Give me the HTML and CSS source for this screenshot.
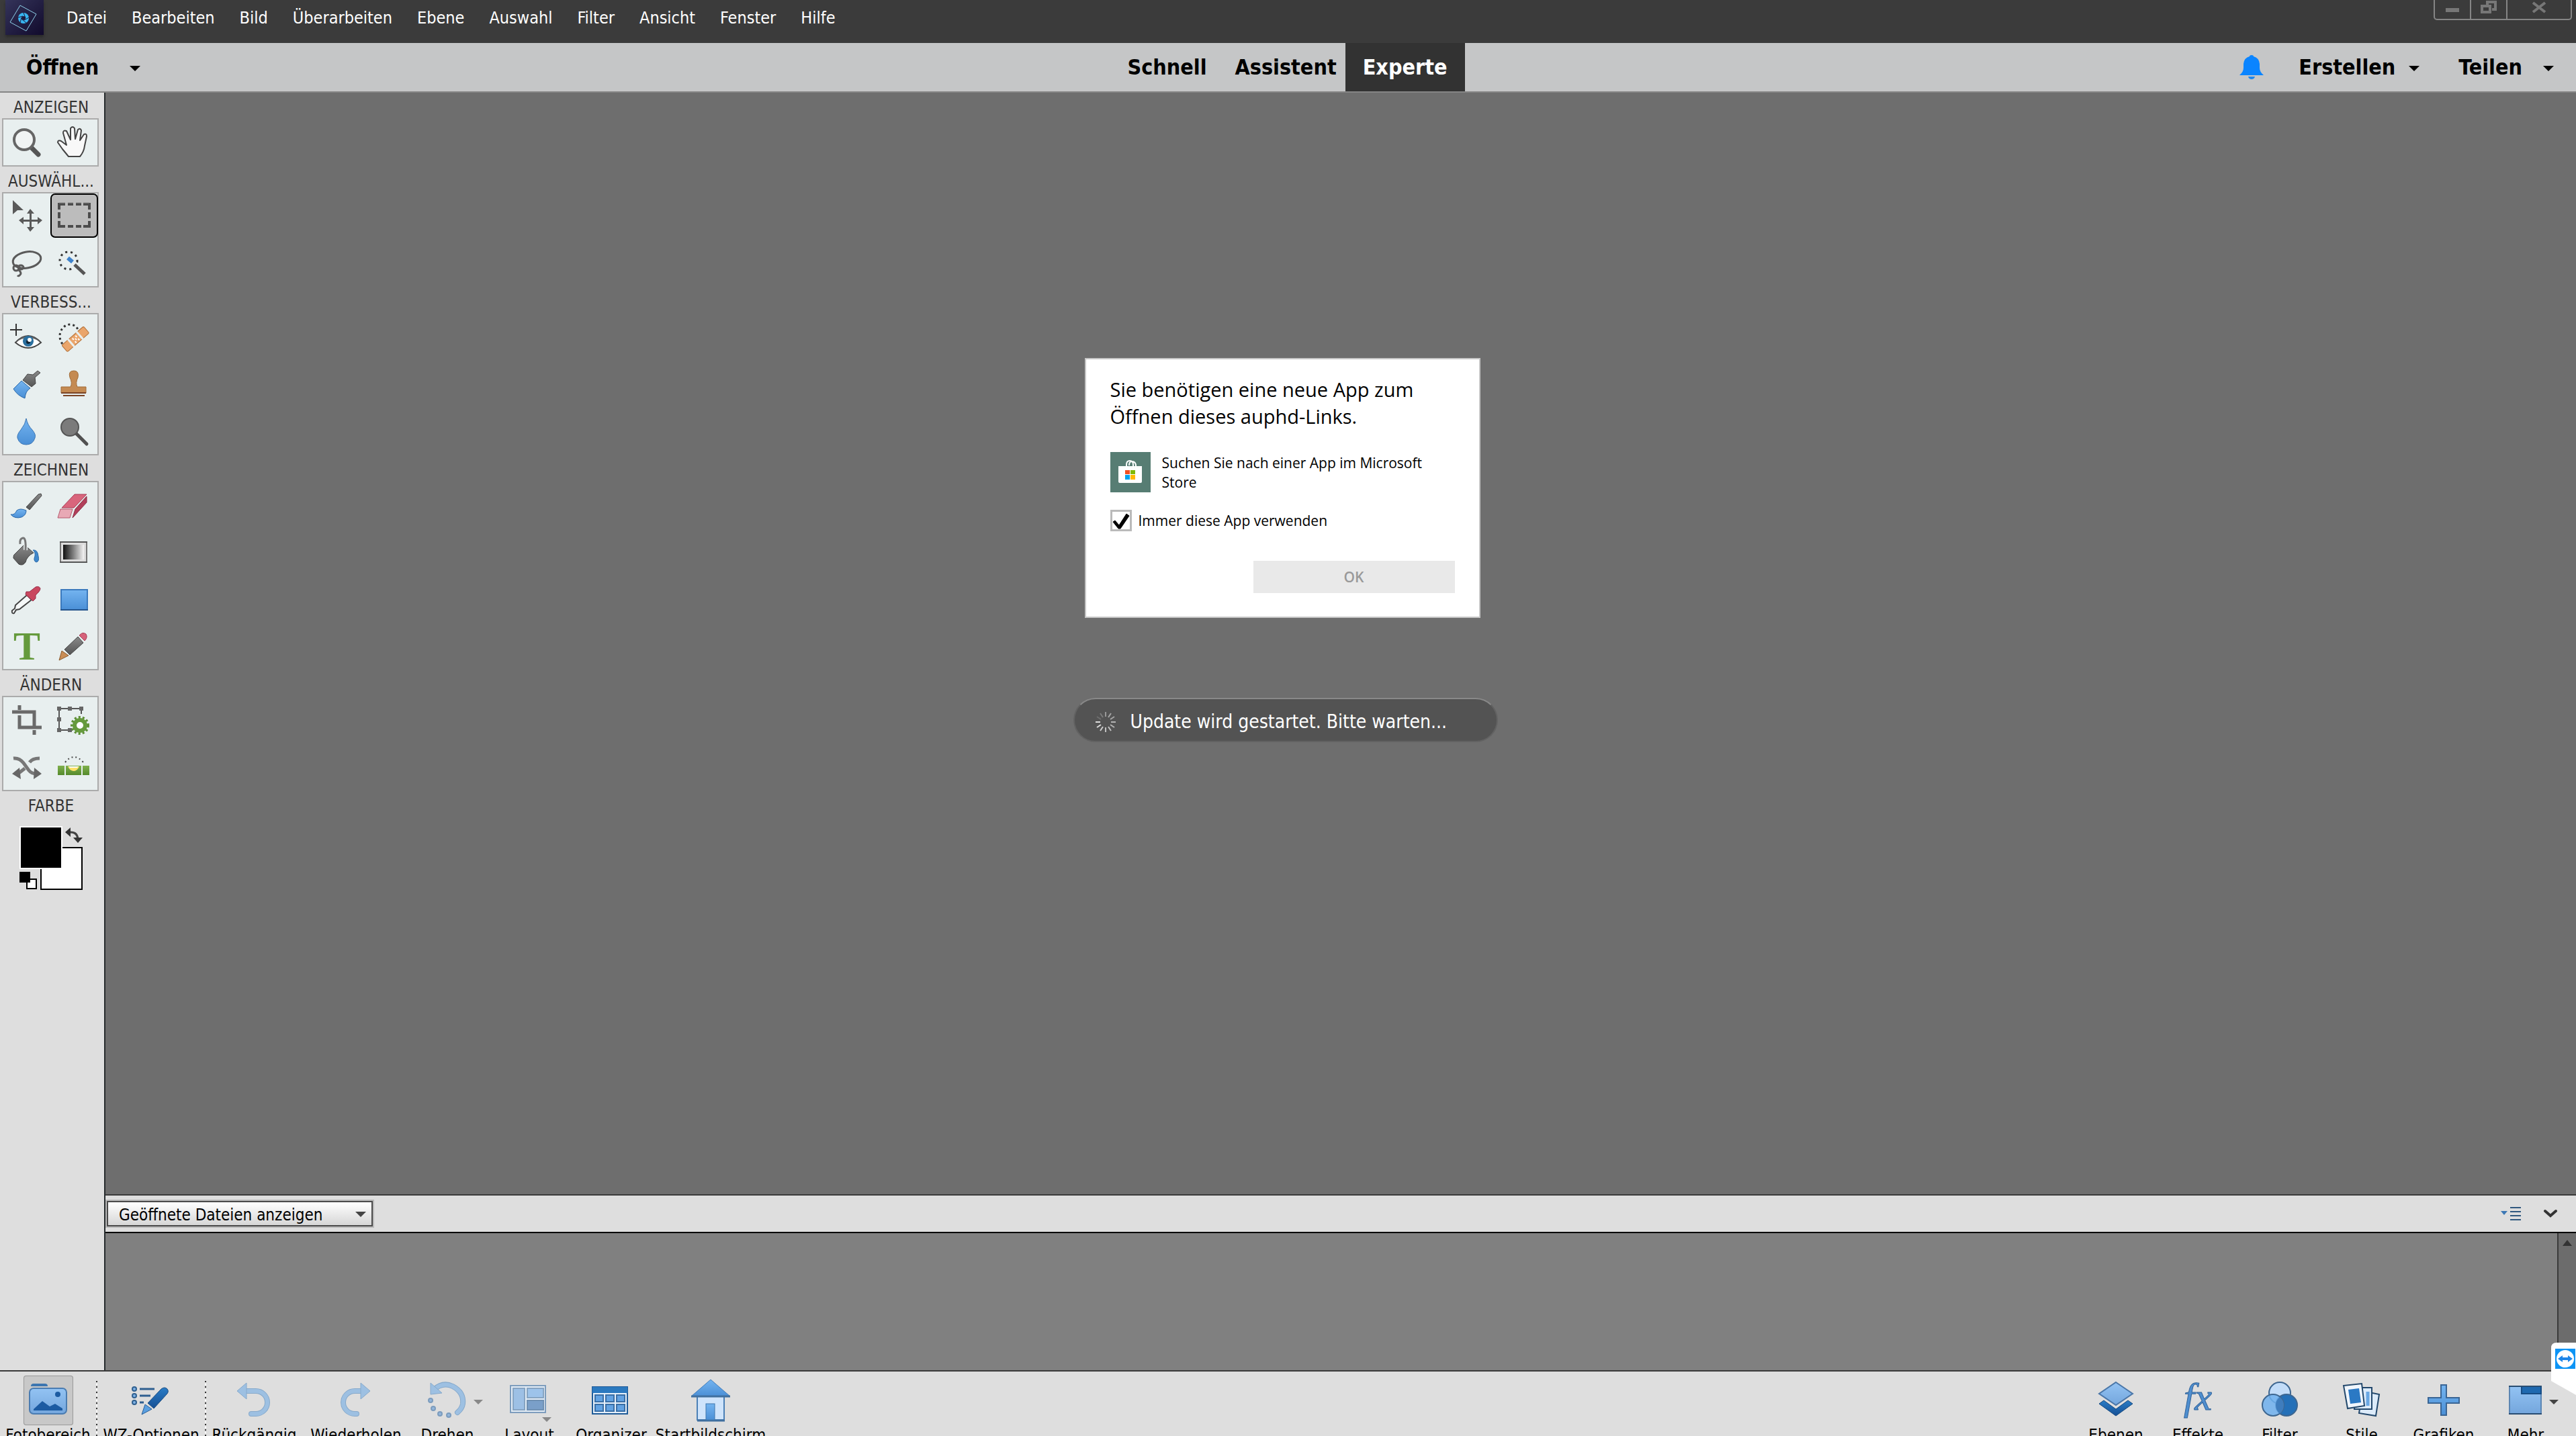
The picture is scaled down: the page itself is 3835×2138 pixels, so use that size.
FILE: index.html
```html
<!DOCTYPE html>
<html lang="de">
<head>
    <meta charset="utf-8">
    <title>Fotoeditor</title>
    <link rel="stylesheet" href="styles.css">
</head>
<body>
    <svg class="defs" width="0" height="0">
        <defs>
            <linearGradient id="grey" x1="0" y1="0" x2="0" y2="1"><stop offset="0" stop-color="#8a8a8a"/><stop offset="1" stop-color="#555"/></linearGradient>
            <linearGradient id="blue" x1="0" y1="0" x2="0" y2="1"><stop offset="0" stop-color="#74b4f0"/><stop offset="1" stop-color="#4a8fd6"/></linearGradient>
            <linearGradient id="light" x1="0" y1="0" x2="0" y2="1"><stop offset="0" stop-color="#93c3f3"/><stop offset="1" stop-color="#74a6dd"/></linearGradient>
            <linearGradient id="dark" x1="0" y1="0" x2="0" y2="1"><stop offset="0" stop-color="#2a7cc6"/><stop offset="1" stop-color="#154f94"/></linearGradient>
            <linearGradient id="green" x1="0" y1="0" x2="0" y2="1"><stop offset="0" stop-color="#7fb04c"/><stop offset="1" stop-color="#558a2c"/></linearGradient>
            <linearGradient id="ramp"><stop offset="0" stop-color="#111"/><stop offset="1" stop-color="#f4f4f4"/></linearGradient>
            <linearGradient id="navy" x1="0" y1="0" x2="1" y2="1"><stop offset="0" stop-color="#34345a"/><stop offset="1" stop-color="#110a2c"/></linearGradient>
        </defs>
    </svg>

    <header class="menubar">
        <svg class="logo" viewBox="0 0 57 52">
            <rect width="57" height="52" fill="url(#navy)"/>
            <path d="M22 8L46 21L31 46L7 33Z" fill="none" stroke="#8fd0e8" stroke-width="1" stroke-linejoin="round"/>
            <circle cx="27" cy="27" r="8" fill="#38b6f1"/>
            <path d="M27 19L30 27M35 26L28 30M31 34L25 29M22 34L24 26M19 26L26 24" stroke="#1d1a3e" stroke-width="1"/>
            <circle cx="27" cy="27" r="3" fill="#1d1a3e"/>
        </svg>
        <nav class="menu">
            <a href="#">Datei</a>
            <a href="#">Bearbeiten</a>
            <a href="#">Bild</a>
            <a href="#">Überarbeiten</a>
            <a href="#">Ebene</a>
            <a href="#">Auswahl</a>
            <a href="#">Filter</a>
            <a href="#">Ansicht</a>
            <a href="#">Fenster</a>
            <a href="#">Hilfe</a>
        </nav>
        <div class="window-buttons">
            <button aria-label="Minimieren"><svg width="24" height="24"><rect x="2" y="12" width="20" height="6" fill="#777"/></svg></button>
            <button aria-label="Verkleinern"><svg width="24" height="24"><path d="M10 8V3H22V14H17" fill="none" stroke="#777" stroke-width="4"/><rect x="2" y="9" width="12" height="9" fill="none" stroke="#777" stroke-width="4"/></svg></button>
            <button class="close" aria-label="Schließen"><svg width="24" height="24"><path d="M3 4L21 18M21 4L3 18" stroke="#777" stroke-width="4"/></svg></button>
        </div>
    </header>

    <div class="modebar">
        <div class="mode-left">
            <button class="open">Öffnen</button>
            <button class="arrow" aria-label="Zuletzt geöffnet"><i class="caret"></i></button>
        </div>
        <div class="modes">
            <button class="mode first">Schnell</button>
            <button class="mode">Assistent</button>
            <button class="mode active">Experte</button>
        </div>
        <div class="mode-right">
            <svg class="bell" viewBox="0 0 36 36"><path d="M18 0Q21 0 21 2Q29 4 30 13V19Q30 25 36 30H0Q6 25 6 19V13Q7 4 15 2Q15 0 18 0Z" fill="#0a84ff"/><path d="M13 32H23Q22 36 18 36Q14 36 13 32Z" fill="#1e87ee"/></svg>
            <button class="create">Erstellen<i class="caret"></i></button>
            <button class="share">Teilen<i class="caret"></i></button>
        </div>
    </div>

    <div class="workspace">
        <aside class="toolbox">
            <h2>ANZEIGEN</h2>
            <div class="tools">
                <button aria-label="Zoom"><svg viewBox="0 0 56 56"><path d="M34 35L45 46" stroke="#555" stroke-width="7" stroke-linecap="round"/><circle cx="24" cy="24" r="15" fill="#f1f4f4" stroke="#666" stroke-width="4"/></svg></button>
                <button aria-label="Hand"><svg viewBox="0 0 56 56"><path d="M19 49L10 38L3 28Q3 24 8 26L16 32L11 14Q11 9 16 11L22 24L22 7Q25 3 28 7L29 23L33 9Q36 6 38 10L36 25L42 16Q46 14 46 19L43 33Q42 42 36 49Z" fill="#f8f8f8" stroke="#444" stroke-width="2" stroke-linejoin="round"/></svg></button>
            </div>
            <h2>AUSWÄHL...</h2>
            <div class="tools">
                <button aria-label="Verschieben"><svg viewBox="0 0 56 56" fill="#5a5a5a"><path d="M7 4L23 19L14 19L7 25Z"/><path d="M32 22H35V47H32ZM21 33H46V36H21Z"/><path d="M33 17L39 24H28ZM33 51L39 44H28ZM16 34L23 29V40ZM51 34L44 29V40Z"/></svg></button>
                <button class="selected" aria-label="Auswahlrechteck"><svg viewBox="0 0 56 56" stroke="#4c4c4c" stroke-width="4" fill="none"><path d="M5 19V11H14M18 11H26M30 11H38M41 11H50V19M50 23V32M50 36V44H41M38 44H30M26 44H18M14 44H5V36M5 32V23" /><path d="M5 9H14M18 9H26M30 9H38M41 9H50" stroke="#8a8a8a" stroke-width="1"/></svg></button>
                <button aria-label="Lasso"><svg viewBox="0 0 56 56" fill="none" stroke="#5a5a5a" stroke-width="3"><ellipse cx="28" cy="23" rx="21" ry="12" transform="rotate(-10 28 23)"/><ellipse cx="12" cy="35" rx="4" ry="4"/><ellipse cx="19" cy="34" rx="4" ry="3"/><path d="M15 37Q21 42 18 45Q16 48 14 46"/></svg></button>
                <button aria-label="Schnellauswahl"><svg viewBox="0 0 56 56" fill="none"><circle cx="19" cy="24" r="13" stroke="#333" stroke-width="3" stroke-dasharray="3 5"/><path d="M15 17L45 46" stroke="#e8efef" stroke-width="9"/><path d="M18 20L25 26" stroke="#3f83cc" stroke-width="6"/><path d="M28 30L43 44" stroke="#555" stroke-width="5"/></svg></button>
            </div>
            <h2>VERBESS...</h2>
            <div class="tools">
                <button aria-label="Rote Augen"><svg viewBox="0 0 56 56"><path d="M3 17H21M12 8V26" stroke="#333" stroke-width="2"/><path d="M11 36Q30 16 49 36Q30 52 11 36Z" fill="#fff" stroke="#444" stroke-width="2"/><path d="M11 36Q30 16 49 36Q30 22 11 36Z" fill="#666"/><circle cx="30" cy="34" r="8" fill="#2a6f9e"/><circle cx="30" cy="35" r="3" fill="#123"/><circle cx="32" cy="32" r="3" fill="#fff"/></svg></button>
                <button aria-label="Bereichsreparatur"><svg viewBox="0 0 56 56"><path d="M10 38Q4 30 7 20Q12 9 22 9Q30 10 34 18" fill="none" stroke="#333" stroke-width="3" stroke-dasharray="3 4"/><g transform="rotate(-41 30 31)"><rect x="8" y="24" width="43" height="13" rx="2" fill="#eaa56b" stroke="#b4733c"/><path d="M21 23V38M38 23V38" stroke="#e8efef" stroke-width="3"/><path d="M26 28H28M32 28H34M26 34H28M32 34H34M29 31H31" stroke="#fff" stroke-width="3"/></g></svg></button>
                <button aria-label="Smartpinsel"><svg viewBox="0 0 56 56"><path d="M44 8L48 11L40 18L41 27L35 32L22 22L29 13L37 14Z" fill="url(#grey)" stroke="#444"/><path d="M20 23L33 34Q26 38 25 49Q14 45 8 35Z" fill="url(#blue)" stroke="#2a68a8"/></svg></button>
                <button aria-label="Stempel"><svg viewBox="0 0 56 56"><path d="M8 32H22Q25 26 21 18Q18 8 27 8Q35 8 33 18Q29 26 32 32H45V41H8Z" fill="#c48a52" stroke="#a06b38"/><path d="M8 41H45M11 45H43" stroke="#7a4426" stroke-width="2"/></svg></button>
                <button aria-label="Weichzeichner"><svg viewBox="0 0 56 56"><path d="M27 9Q29 19 36 26Q42 33 40 38Q37 48 27 48Q17 48 14 38Q13 33 19 26Q26 17 27 9Z" fill="url(#blue)" stroke="#3a75b4"/></svg></button>
                <button aria-label="Schwamm"><svg viewBox="0 0 56 56"><path d="M30 31L46 47" stroke="#505050" stroke-width="5" stroke-linecap="round"/><circle cx="21" cy="22" r="13" fill="#7b7b7b" stroke="#555" stroke-width="2"/></svg></button>
            </div>
            <h2>ZEICHNEN</h2>
            <div class="tools">
                <button aria-label="Pinsel"><svg viewBox="0 0 56 56"><path d="M49 11L50 14L32 35L27 31L45 12Z" fill="url(#grey)" stroke="#444"/><path d="M4 42Q10 43 13 36Q18 32 27 36Q27 43 20 46Q10 49 4 42Z" fill="url(#blue)" stroke="#2a68a8"/></svg></button>
                <button aria-label="Radiergummi"><svg viewBox="0 0 56 56"><path d="M28 12H46L27 32H9Z" fill="#d9657c" stroke="#a93c55"/><path d="M7 34H25L21 47H3Z" fill="#e8a9b5" stroke="#b5596d"/><path d="M46 15V24L25 47L29 34Z" fill="#b23f5a" stroke="#8d2b44"/></svg></button>
                <button aria-label="Füllwerkzeug"><svg viewBox="0 0 56 56"><path d="M24 17L38 29Q28 34 26 43Q22 49 16 46L8 37Q7 32 12 29Z" fill="url(#grey)" stroke="#444"/><path d="M26 25Q27 6 22 7Q17 8 18 16" fill="none" stroke="#e8efef" stroke-width="6"/><path d="M26 25Q27 6 22 7Q17 8 18 16" fill="none" stroke="#777" stroke-width="3"/><path d="M37 25Q44 24 45 34Q47 42 42 43Q37 41 40 34Q41 28 37 25Z" fill="#3f88cc" stroke="#2a68a8"/></svg></button>
                <button aria-label="Verlauf"><svg viewBox="0 0 56 56"><rect x="7" y="13" width="39" height="30" fill="#ddd" stroke="#777" stroke-width="2"/><path d="M6 13H47M6 43H47" stroke="#555" stroke-width="2"/><rect x="11" y="17" width="31" height="22" fill="url(#ramp)"/></svg></button>
                <button aria-label="Farbwähler"><svg viewBox="0 0 56 56"><path d="M28 22L35 29L17 43L12 44L9 49Q5 50 6 45L10 42L11 37Z" fill="#f5f8f8" stroke="#444" stroke-width="2"/><path d="M27 17L32 17L41 10Q46 8 48 12Q48 16 41 22L41 27L37 31L26 21Z" fill="#c9475f" stroke="#98304a"/></svg></button>
                <button aria-label="Form"><svg viewBox="0 0 56 56"><rect x="8" y="14" width="39" height="30" fill="url(#blue)" stroke="#3a79bd" stroke-width="2"/><path d="M7 44H48" stroke="#24548c" stroke-width="2"/></svg></button>
                <button aria-label="Text"><svg viewBox="0 0 56 56"><text class="glyph-t" x="28" y="48" text-anchor="middle">T</text></svg></button>
                <button aria-label="Buntstift"><svg viewBox="0 0 56 56"><path d="M5 49L9 35L19 42Z" fill="#c98d55" stroke="#8b5a2c"/><path d="M13 33L33 14L41 23L21 41Z" fill="url(#grey)" stroke="#444"/><path d="M35 12Q40 6 45 10Q48 15 43 20Z" fill="#d6627a" stroke="#a63d55"/></svg></button>
            </div>
            <h2>ÄNDERN</h2>
            <div class="tools">
                <button aria-label="Freistellen"><svg viewBox="0 0 56 56" fill="none" stroke="#6a6a6a" stroke-width="5"><path d="M6 16H39V37M17 6V13M17 21V39H50M39 43V50"/></svg></button>
                <button aria-label="Neu zusammensetzen"><svg viewBox="0 0 56 56"><path d="M38 19V11H5V43H25" fill="none" stroke="#555" stroke-width="2"/><path d="M2 8H8V14H2ZM18 8H24V14H18ZM35 8H41V14H35ZM2 24H8V30H2ZM2 40H8V46H2ZM18 40H24V46H18Z" fill="#666"/><circle cx="36" cy="36" r="12" fill="none" stroke="#5d8f36" stroke-width="4" stroke-dasharray="3 3"/><circle cx="36" cy="36" r="8" fill="#fff" stroke="#659a3c" stroke-width="6"/></svg></button>
                <button aria-label="Inhaltssensitiv verschieben"><svg viewBox="0 0 56 56"><path d="M8 15Q17 14 23 22L31 33Q35 38 42 38M47 15Q36 15 32 21M25 30L16 37" fill="none" stroke="#777" stroke-width="5"/><path d="M39 29L50 38L38 46ZM17 29L6 38L19 46Z" fill="#666"/></svg></button>
                <button aria-label="Gerade ausrichten"><svg viewBox="0 0 56 56"><path d="M14 21Q27 5 41 21" fill="none" stroke="#444" stroke-width="2" stroke-dasharray="2 4"/><path d="M3 26H13V40H3ZM15 26H38V40H15ZM40 26H50V40H40Z" fill="url(#green)"/><path d="M18 27H35Q32 34 27 34Q21 34 18 27Z" fill="#ffe069"/><path d="M19 27H34L32 29H21Z" fill="#fff"/></svg></button>
            </div>
            <h2>FARBE</h2>
            <svg class="swatches" viewBox="0 0 96 96">
                <rect x="32" y="32" width="61" height="62" fill="#fff" stroke="#000" stroke-width="2"/>
                <rect x="0" y="0" width="64" height="64" fill="#fff"/>
                <rect x="2" y="2" width="60" height="60" fill="#000"/>
                <rect x="11" y="79" width="14" height="14" fill="#fff" stroke="#000" stroke-width="2"/>
                <rect x="0" y="68" width="16" height="16" fill="#000"/>
                <path d="M74 9Q86 8 87 19" fill="none" stroke="#444" stroke-width="3"/>
                <path d="M68 9L76 2V16ZM80 17H94L87 25Z" fill="#333"/>
            </svg>
        </aside>

        <main class="stage">
            <div class="canvas"></div>
            <div class="binbar">
                <div class="bin-select">
                    <select aria-label="Fotobereich">
                        <option>Geöffnete Dateien anzeigen</option>
                    </select>
                </div>
                <div class="bin-actions">
                    <button aria-label="Optionen"><svg width="30" height="24"><path d="M0 8H10L5 14Z" fill="#3c78b4"/><path d="M14 3H30M14 9H30M14 15H30M14 21H30" stroke="#31597f" stroke-width="2"/></svg></button>
                    <button aria-label="Einklappen"><svg width="20" height="24"><path d="M2 8L10 15L18 8" fill="none" stroke="#333" stroke-width="4" stroke-linecap="round"/></svg></button>
                </div>
            </div>
            <div class="bin">
                <div class="scrollbar"><svg width="14" height="9"><path d="M7 0L14 9H0Z" fill="#333"/></svg></div>
            </div>
        </main>
    </div>

    <footer class="taskbar">
        <button class="task m"><span class="pic pressed"><svg viewBox="0 0 74 74"><path d="M11 16Q11 12 15 12H32Q36 12 36 16Z" fill="#3d76b0"/><rect x="9" y="19" width="55" height="38" rx="6" fill="url(#light)" stroke="#4a7cb1" stroke-width="2"/><path d="M15 50L28 38L39 46L47 42L58 49V52H15Z" fill="#1c5ba2"/><circle cx="51" cy="28" r="4" fill="#1c5ba2"/></svg></span>Fotobereich</button>
        <i class="divider"></i>
        <button class="task l"><span class="pic"><svg viewBox="0 0 74 74"><g fill="#7fb2e6" stroke="#30608f" stroke-width="2"><circle cx="12" cy="20" r="3"/><circle cx="12" cy="30" r="3"/><circle cx="12" cy="40" r="3"/></g><path d="M20 20H42M20 30H36M20 40H26" stroke="#2f5f90" stroke-width="3"/><path d="M23 58L28 43L38 50Z" fill="#5a9fe0" stroke="#2a5f97"/><path d="M32 41L52 20Q57 16 61 20Q64 24 60 28L41 49Z" fill="url(#dark)" stroke="#1d4d80"/></svg></span>WZ-Optionen</button>
        <i class="divider"></i>
        <button class="task m"><span class="pic"><svg viewBox="0 0 74 74"><path d="M22 23H39A17 17 0 0 1 39 57H32" fill="none" stroke="#86a9cb" stroke-width="8" stroke-linecap="round"/><path d="M22 23H39A17 17 0 0 1 39 57H32" fill="none" stroke="#9dc0e2" stroke-width="6" stroke-linecap="round"/><path d="M11 23L25 11V35Z" fill="#9dc0e2" stroke="#86a9cb"/></svg></span>Rückgängig</button>
        <button class="task l"><span class="pic"><svg viewBox="0 0 74 74"><path d="M50 23H35A17 17 0 0 0 35 57H38" fill="none" stroke="#86a9cb" stroke-width="8" stroke-linecap="round"/><path d="M50 23H35A17 17 0 0 0 35 57H38" fill="none" stroke="#9dc0e2" stroke-width="6" stroke-linecap="round"/><path d="M58 23L44 11V35Z" fill="#9dc0e2" stroke="#86a9cb"/></svg></span>Wiederholen</button>
        <button class="task s"><span class="pic"><svg viewBox="0 0 74 74"><path d="M17 21Q30 9 45 16Q62 25 60 42Q59 49 52 55" fill="none" stroke="#86a9cb" stroke-width="8" stroke-linecap="round"/><path d="M17 21Q30 9 45 16Q62 25 60 42Q59 49 52 55" fill="none" stroke="#9dc0e2" stroke-width="6" stroke-linecap="round"/><path d="M12 11V28L29 26Z" fill="#9dc0e2" stroke="#86a9cb"/><g fill="#94b6dc" stroke="#7c9cbd" stroke-width="2"><circle cx="12" cy="37" r="3"/><circle cx="16" cy="49" r="3"/><circle cx="26" cy="57" r="3"/><circle cx="39" cy="59" r="3"/></g></svg><i class="drop grey"></i></span>Drehen</button>
        <button class="task n"><span class="pic"><svg viewBox="0 0 74 74"><rect x="9" y="15" width="52" height="40" fill="#e3ecf5" stroke="#7e9dbd" stroke-width="2"/><path d="M13 19H30V51H13Z" fill="#9dc0e5" stroke="#86a4c2" stroke-width="2"/><path d="M34 19H58V33H34Z" fill="#9dc3ea" stroke="#86a4c2" stroke-width="2"/><path d="M34 37H58V51H34Z" fill="#7a9fc9" stroke="#6f90b3" stroke-width="2"/></svg><i class="drop grey low"></i></span>Layout</button>
        <button class="task s"><span class="pic"><svg viewBox="0 0 74 74"><rect x="9" y="17" width="52" height="40" fill="#e6f0fa" stroke="#1f5b98" stroke-width="2"/><rect x="9" y="17" width="52" height="9" fill="#2b79bf"/><g fill="#62a2e2" stroke="#3a6fa6" stroke-width="2"><path d="M13 29H25V39H13ZM29 29H41V39H29ZM45 29H57V39H45ZM13 43H25V53H13ZM29 43H41V53H29ZM45 43H57V53H45Z"/></g></svg></span>Organizer</button>
        <button class="task xl"><span class="pic"><svg viewBox="0 0 74 74"><rect x="17" y="30" width="40" height="36" fill="#cfe4fb" stroke="#4a7fb6" stroke-width="2"/><path d="M37 6L66 31H8Z" fill="url(#blue)" stroke="#3f7cbb"/><path d="M8 31H66M17 67H58" stroke="#41709f" stroke-width="3"/><rect x="30" y="42" width="13" height="24" fill="url(#blue)" stroke="#3f76ad"/></svg></span>Startbildschirm</button>

        <div class="panels">
            <button class="task p"><span class="pic"><svg viewBox="0 0 74 74"><path d="M12 42L19 37L37 50L55 37L62 42L37 60Z" fill="url(#dark)" stroke="#174a80"/><path d="M37 10L62 27L37 44L12 27Z" fill="url(#light)" stroke="#4a76a8" stroke-width="2"/></svg></span>Ebenen</button>
            <button class="task p"><span class="pic"><svg viewBox="0 0 74 74"><text class="glyph-fx" x="37" y="51" text-anchor="middle">fx</text></svg></span>Effekte</button>
            <button class="task p"><span class="pic"><svg viewBox="0 0 74 74" stroke="#3d6690" stroke-width="2"><circle cx="37" cy="26" r="16" fill="#c2dcf8"/><circle cx="47" cy="44" r="16" fill="#2470b8"/><circle cx="27" cy="44" r="16" fill="#6fb0ee" fill-opacity=".85"/><path d="M37 32Q43 37 43 44Q43 52 37 57Q31 52 31 44Q31 37 37 32Z" fill="#3f7dbd" stroke="none"/></svg></span>Filter</button>
            <button class="task p"><span class="pic"><svg viewBox="0 0 74 74" stroke="#23486c" stroke-width="2"><path d="M38 23L63 28L58 60L33 56Z" fill="#dcebfa"/><path d="M26 18H52V50H26Z" fill="#dcebfa"/><path d="M46 24V45" stroke="#6aa8e4" stroke-width="5"/><path d="M10 15L37 12L41 45L16 49Z" fill="#f0f6fd"/><path d="M17 21L33 19L36 40L20 42Z" fill="#2b79c4" stroke="none"/></svg></span>Stile</button>
            <button class="task p"><span class="pic"><svg viewBox="0 0 74 74"><path d="M33 14H41V33H60V41H41V59H33V41H14V33H33Z" fill="url(#blue)" stroke="#3a6594" stroke-width="2"/></svg></span>Grafiken</button>
            <button class="task p"><span class="pic"><svg viewBox="0 0 74 74"><rect x="13" y="16" width="47" height="41" fill="url(#light)" stroke="#5c86b3" stroke-width="2"/><rect x="31" y="16" width="29" height="11" fill="#1f69b0" stroke="#174d85" stroke-width="2"/><path d="M12 16H61M12 57H61" stroke="#294d72" stroke-width="2"/></svg><i class="drop more"></i></span>Mehr</button>
        </div>
    </footer>

    <form class="dialog">
        <h1>Sie benötigen eine neue App zum Öffnen dieses auphd-Links.</h1>
        <div class="store">
            <svg viewBox="0 0 60 60">
                <rect width="60" height="60" fill="#577d73"/>
                <path d="M24 22V19Q24 13 29 13Q34 13 34 19V22M28 20Q28 14 32 14Q38 14 38 21" fill="none" stroke="#fff" stroke-width="2"/>
                <path d="M12 21H47V44Q47 46 45 46H14Q12 46 12 44Z" fill="#fff"/>
                <path d="M22 27H29V33H22Z" fill="#f25022"/><path d="M30 27H37V33H30Z" fill="#7fba00"/>
                <path d="M22 34H29V41H22Z" fill="#00a4ef"/><path d="M30 34H37V41H30Z" fill="#ffb900"/>
            </svg>
            <p>Suchen Sie nach einer App im Microsoft Store</p>
        </div>
        <label class="always"><span class="check"><input type="checkbox" checked><svg viewBox="0 0 32 32"><path d="M4 18L7 16L13 23L24 6L28 9L15 28H12Z" fill="#000" stroke="#000"/></svg></span>Immer diese App verwenden</label>
        <button class="ok" type="button" disabled>OK</button>
    </form>

    <div class="toast">
        <svg viewBox="-15 -15 30 30" stroke="#ddd" stroke-width="2">
            <path d="M0 -15V-8" opacity=".5"/><path d="M8 -13L4 -7" opacity=".6"/><path d="M13 -8L7 -4" opacity=".6"/><path d="M15 0H8" opacity=".7"/>
            <path d="M13 8L7 4" opacity=".7"/><path d="M8 13L4 7" opacity=".8"/><path d="M0 15V8" opacity=".8"/><path d="M-8 13L-4 7" opacity=".9"/>
            <path d="M-13 8L-7 4"/><path d="M-15 0H-8"/><path d="M-13 -8L-7 -4" opacity=".2"/><path d="M-8 -13L-4 -7" opacity=".3"/>
        </svg>
        Update wird gestartet. Bitte warten...
    </div>

    <div class="remote-tab">
        <svg viewBox="0 0 37 78"><path d="M37 0H8Q0 0 0 8V57L37 78Z" fill="#fff"/><rect x="6" y="9" width="30" height="30" fill="#0d94f5"/><circle cx="21" cy="24" r="13" fill="#fff"/><path d="M10 24L17 19V22H25V19L32 24L25 29V26H17V29Z" fill="#1f86e8"/></svg>
    </div>
</body>
</html>
```
FILE: styles.css
```css
* {
    box-sizing: border-box;
}
body {
    margin: 0;
    height: 100vh;
    display: flex;
    flex-direction: column;
    overflow: hidden;
    background: #dedede;
    color: #000;
    font-family: "DejaVu Sans Condensed", "Noto Sans", sans-serif;
    font-size: 25px;
}
button, select {
    margin: 0;
    padding: 0;
    border: none;
    background: none;
    color: inherit;
    font: inherit;
}
svg {
    display: block;
}
.defs {
    position: absolute;
}

/* menu */
.menubar {
    display: flex;
    align-items: flex-start;
    height: 64px;
    padding: 0 6px 0 8px;
    background: #3b3b3b;
}
.logo {
    width: 57px;
    height: 52px;
    box-shadow: 0 3px 4px #2a2a2a;
}
.menu {
    display: flex;
    gap: 37px;
    margin-left: 34px;
    line-height: 54px;
}
.menu a {
    color: #fff;
    text-decoration: none;
}
.window-buttons {
    display: flex;
    height: 30px;
    margin-left: auto;
    border: 2px solid #858585;
    border-top: none;
    border-radius: 0 0 5px 5px;
}
.window-buttons button {
    display: flex;
    justify-content: center;
    width: 54px;
    border-right: 2px solid #858585;
}
.window-buttons .close {
    width: 94px;
    border-right: none;
}

/* mode bar */
.modebar {
    display: grid;
    grid-template-columns: 1fr auto 1fr;
    height: 74px;
    border-bottom: 2px solid #858585;
    background: #c5c6c7;
    font-size: 32px;
    font-weight: bold;
}
.mode-left, .modes, .mode-right {
    display: flex;
    align-items: stretch;
}
.open {
    padding: 0 46px 0 39px;
}
.mode {
    padding: 0 13px;
}
.mode.first {
    margin-right: 16px;
    padding-left: 24px;
}
.mode.active {
    padding: 0 26px;
    background: #323232;
    color: #fff;
}
.mode-right {
    justify-content: flex-end;
    align-items: center;
    padding-right: 33px;
}
.bell {
    width: 36px;
    height: 36px;
    margin-right: 52px;
}
.caret {
    display: inline-block;
    border: 8px solid transparent;
    border-top-color: #000;
    border-bottom: none;
    vertical-align: middle;
}
.create .caret {
    margin: 0 58px 0 20px;
}
.share .caret {
    margin-left: 31px;
}

/* toolbox */
.workspace {
    display: flex;
    flex: 1;
    min-height: 0;
}
.toolbox {
    width: 157px;
    padding-left: 3px;
    padding-right: 8px;
    border-right: 2px solid #262b2d;
}
.toolbox h2 {
    margin: 0;
    padding: 6px 0 0 2px;
    color: #333;
    font-size: 24px;
    font-weight: normal;
    line-height: 32px;
    text-align: center;
    white-space: nowrap;
}
.tools {
    display: grid;
    grid-template-columns: 1fr 1fr;
    grid-auto-rows: 70px;
    padding: 1px;
    background: #e8efef;
    box-shadow: inset 0 0 0 2px #ababab;
}
.tools button {
    display: flex;
    align-items: center;
    justify-content: center;
}
.tools svg {
    flex: none;
    width: 56px;
    height: 56px;
    overflow: visible;
}
.tools .selected {
    margin: 1px 0 3px;
    border: 2px solid #000;
    border-radius: 7px;
    background: #bcbcbc;
}
.glyph-t {
    fill: #659a3c;
    font: bold 60px "Liberation Serif", serif;
}
.swatches {
    width: 96px;
    height: 96px;
    margin: 14px 0 0 26px;
}

/* canvas and photo bin */
.stage {
    display: flex;
    flex: 1;
    flex-direction: column;
}
.canvas {
    flex: 1;
    border-bottom: 2px solid #3a3a3a;
    background: #6e6e6e;
}
.binbar {
    display: flex;
    align-items: center;
    justify-content: space-between;
    height: 56px;
    padding: 0 28px 0 2px;
    border-bottom: 2px solid #000;
    background: #dedede;
}
.bin-select {
    position: relative;
    width: 396px;
    height: 38px;
    box-shadow: 0 0 0 2px #bababa;
}
.bin-select select {
    width: 100%;
    height: 100%;
    padding: 4px 16px 0;
    border: 2px solid #4a4a4a;
    border-radius: 0;
    appearance: none;
    background: linear-gradient(#fff, #d6d6d6);
    font-size: 24px;
}
.bin-select::after {
    content: "";
    position: absolute;
    top: 16px;
    right: 10px;
    border: 8px solid transparent;
    border-top-color: #444;
    border-bottom: none;
}
.bin-actions {
    display: flex;
    gap: 34px;
}
.bin {
    display: flex;
    justify-content: flex-end;
    height: 204px;
    background: #808080;
}
.scrollbar {
    width: 28px;
    padding: 10px 6px;
    border-left: 2px solid #3a3a3a;
    background: #6c6c6c;
}

/* bottom bar */
.taskbar {
    display: flex;
    height: 98px;
    overflow: hidden;
    border-top: 2px solid #3a3a3a;
    background: #dedede;
    font-size: 24px;
}
.task {
    display: flex;
    flex-direction: column;
    align-items: center;
    flex: none;
    height: 120px;
    padding-top: 6px;
    line-height: 30px;
    white-space: nowrap;
}
.task.s {
    width: 112px;
}
.task.n {
    width: 132px;
}
.task.m {
    width: 143px;
}
.task.l {
    width: 160px;
}
.task.xl {
    width: 184px;
}
.task.p {
    width: 122px;
}
.pic {
    position: relative;
    width: 74px;
    height: 74px;
}
.pic.pressed {
    border-radius: 4px;
    background: #c8c8c8;
    box-shadow: inset 0 0 0 1px #999;
}
.pic svg {
    overflow: visible;
}
.divider {
    width: 2px;
    margin-top: 14px;
    background: repeating-linear-gradient(#333 0 2px, #dedede 2px 4px, #fff 4px 6px, #dedede 6px 8px);
}
.drop {
    position: absolute;
    top: 36px;
    left: 76px;
    border: 7px solid transparent;
    border-top-color: #444;
    border-bottom: none;
}
.drop.grey {
    border-top-color: #888;
}
.drop.low {
    top: 62px;
    left: 56px;
}
.drop.more {
    left: 72px;
}
.glyph-fx {
    fill: #4f8fd0;
    stroke: #33649a;
    font: italic 58px "Liberation Serif", serif;
}
.panels {
    display: flex;
    margin-left: auto;
    margin-right: 14px;
}

/* dialog */
.dialog {
    position: absolute;
    top: 533px;
    left: calc(50% - 303px);
    width: 589px;
    padding: 25px 36px 35px;
    border: 2px solid #c6c6c6;
    background: #fff;
    font-family: "Open Sans", "Noto Sans", sans-serif;
    font-size: 21px;
}
.dialog h1 {
    margin: 0 0 33px;
    font-size: 29px;
    font-weight: normal;
    line-height: 40px;
}
.store {
    display: flex;
    gap: 17px;
}
.store svg {
    flex: none;
    width: 60px;
    height: 60px;
}
.store p {
    margin: 2px 0 0;
    line-height: 29px;
}
.always {
    display: flex;
    align-items: center;
    gap: 10px;
    margin: 26px 0 44px;
}
.check {
    position: relative;
    width: 32px;
    height: 32px;
}
.check input {
    width: 32px;
    height: 32px;
    margin: 0;
    border: 3px solid #bababa;
    appearance: none;
    background: #fff;
}
.check svg {
    position: absolute;
    inset: 0;
}
.ok {
    display: block;
    width: 300px;
    height: 48px;
    margin-left: auto;
    background: #e9e9e9;
    color: #999;
    font-weight: 600;
}

/* update message */
.toast {
    position: absolute;
    top: 1039px;
    left: calc(50% - 320px);
    display: flex;
    align-items: center;
    gap: 22px;
    width: 632px;
    height: 66px;
    padding: 5px 31px 0;
    border: 2px solid #626262;
    border-top-color: #898989;
    border-radius: 33px;
    background: #535353;
    color: #fff;
    font-size: 28px;
    white-space: nowrap;
}
.toast svg {
    width: 30px;
    height: 30px;
}

.remote-tab {
    position: absolute;
    right: 0;
    bottom: 61px;
    width: 37px;
    height: 78px;
}
```
